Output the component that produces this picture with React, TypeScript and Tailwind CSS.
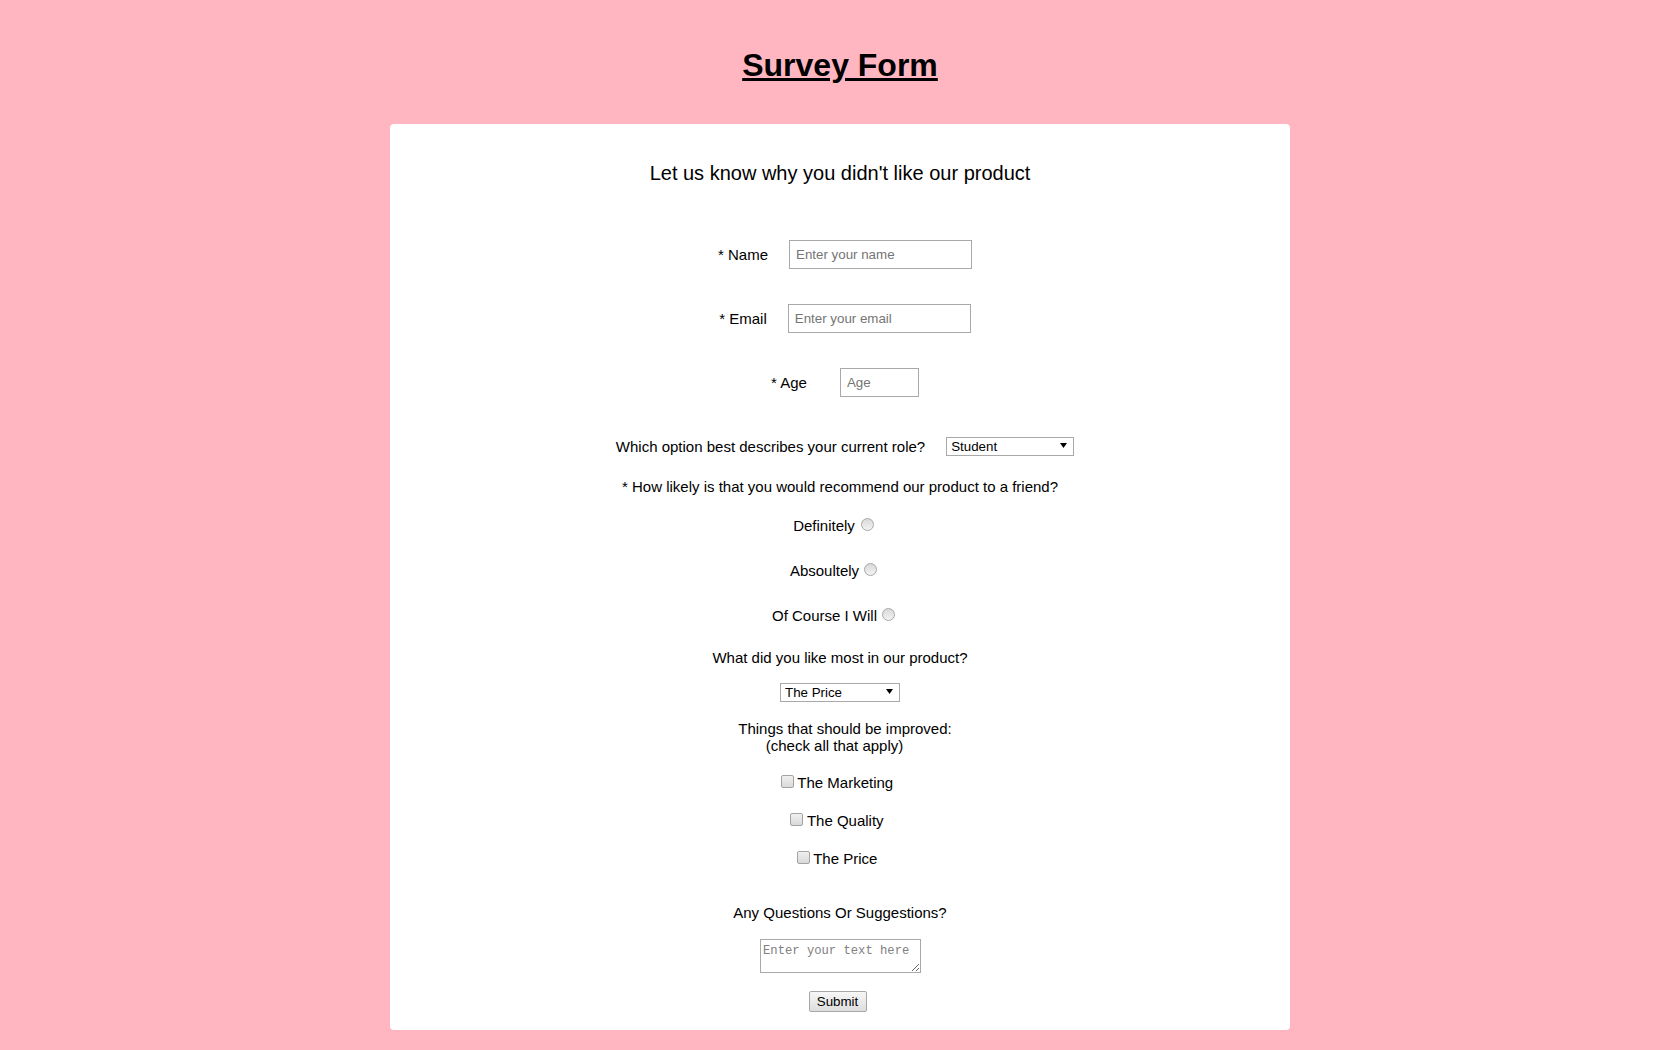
import React from 'react';

// === FORM DATA ===
const roles = ["Student", "Full Time Job", "Full Time Learner", "Prefer not to say", "Other"];
const favourites = ["The Price", "The Quality", "The Marketing"];
const answers = [
  { label: "Definitely", gap: "ml-[6px]" },
  { label: "Absoultely", gap: "ml-[5px]" },
  { label: "Of Course I Will", gap: "ml-[5px]" },
];
const improvements = ["The Marketing", "The Quality", "The Price"];

const Dropdown = ({ options, className }: { options: string[]; className: string }) => (
  <div className={`relative ${className}`}>
    <select className="appearance-none w-full h-full border border-[#a9a9a9] bg-white pl-[4px] text-[13.33px] leading-[15px] text-black outline-none rounded-none">
      {options.map((o) => (
        <option key={o}>{o}</option>
      ))}
    </select>
    {/* arrow sits over the select */}
    <svg
      className="absolute right-[7px] top-[6px] pointer-events-none"
      width="7"
      height="5"
      viewBox="0 0 7 5"
    >
      <path d="M0 0h7L3.5 5z" fill="#000" />
    </svg>
  </div>
);

const TextField = ({ placeholder, className }: { placeholder: string; className: string }) => (
  <input
    type="text"
    placeholder={placeholder}
    className={`h-[29px] border border-[#a9a9a9] bg-white pl-[6px] text-[13.33px] text-black placeholder:text-[#757575] outline-none ${className}`}
  />
);

export default function App() {
  return (
    <main className="min-h-screen bg-[#ffb6c1] pt-[47px] pb-[20px] font-['Liberation_Sans',Arial,sans-serif] text-black">
      <h1 className="text-center text-[32px] leading-[37px] font-bold underline">Survey Form</h1>

      <form className="mx-auto mt-[40px] w-[900px] rounded-[4px] bg-white pt-[38px] pb-[18px] flex flex-col items-center text-[15px] leading-[17px]">
        <h2 className="text-[20px] leading-[23px] font-normal">Let us know why you didn't like our product</h2>

        {/* === TEXT FIELDS === */}
        <div className="mt-[55px] flex items-center pl-[10px]">
          <label className="mr-[21px]">* Name</label>
          <TextField placeholder="Enter your name" className="w-[183px]" />
        </div>
        <div className="mt-[35px] flex items-center pl-[10px]">
          <label className="mr-[21px]">* Email</label>
          <TextField placeholder="Enter your email" className="w-[183px]" />
        </div>
        <div className="mt-[35px] flex items-center pl-[10px]">
          <label className="mr-[33px]">* Age</label>
          <TextField placeholder="Age" className="w-[79px]" />
        </div>

        <div className="mt-[40px] flex items-center pl-[10px]">
          <label className="mr-[21px]">Which option best describes your current role?</label>
          <Dropdown options={roles} className="w-[128px] h-[19px]" />
        </div>

        {/* === RADIOS === */}
        <p className="mt-[22px]">* How likely is that you would recommend our product to a friend?</p>
        <div className="mt-[22px] flex flex-col items-center gap-[28px]">
          {answers.map((a) => (
            <label key={a.label} className="flex items-center h-[17px] pr-[13px]">
              <span>{a.label}</span>
              <input
                type="radio"
                name="recommend"
                className={`appearance-none w-[13px] h-[13px] rounded-full border border-[#a8a8a8] bg-linear-to-b from-[#d9d9d9] to-[#f3f3f3] mb-[2px] ${a.gap}`}
              />
            </label>
          ))}
        </div>

        <p className="mt-[25px]">What did you like most in our product?</p>
        <Dropdown options={favourites} className="mt-[17px] w-[120px] h-[19px]" />

        <div className="mt-[18px] flex flex-col items-center">
          <span className="pl-[10px]">Things that should be improved:</span>
          <span className="pr-[11px]">(check all that apply)</span>
        </div>

        {/* === CHECKBOXES === */}
        <div className="mt-[20px] flex flex-col items-center gap-[21px]">
          {improvements.map((item) => (
            <label key={item} className="flex items-center h-[17px] pr-[6px]">
              <input
                type="checkbox"
                className="appearance-none w-[13px] h-[13px] rounded-[2px] border border-[#a3a3a3] bg-linear-to-b from-[#f0f0f0] to-[#d9d9d9] mr-[3.5px] mb-[3px]"
              />
              <span>{item}</span>
            </label>
          ))}
        </div>

        <p className="mt-[37px]">Any Questions Or Suggestions?</p>
        <textarea
          placeholder="Enter your text here"
          className="mt-[18px] ml-[1px] w-[161px] h-[34px] border border-[#a9a9a9] px-[2px] pt-[4px] pb-[2px] font-['Liberation_Mono',monospace] text-[12.2px] leading-[15px] placeholder:text-[#808080] outline-none resize"
        />

        <button
          type="button"
          className="mt-[18px] mr-[5px] w-[58px] h-[21px] border border-[#a6a6a6] rounded-[2px] bg-linear-to-b from-[#f7f7f7] to-[#dddddd] text-[13.33px] leading-none text-black"
        >
          Submit
        </button>
      </form>
    </main>
  );
}
